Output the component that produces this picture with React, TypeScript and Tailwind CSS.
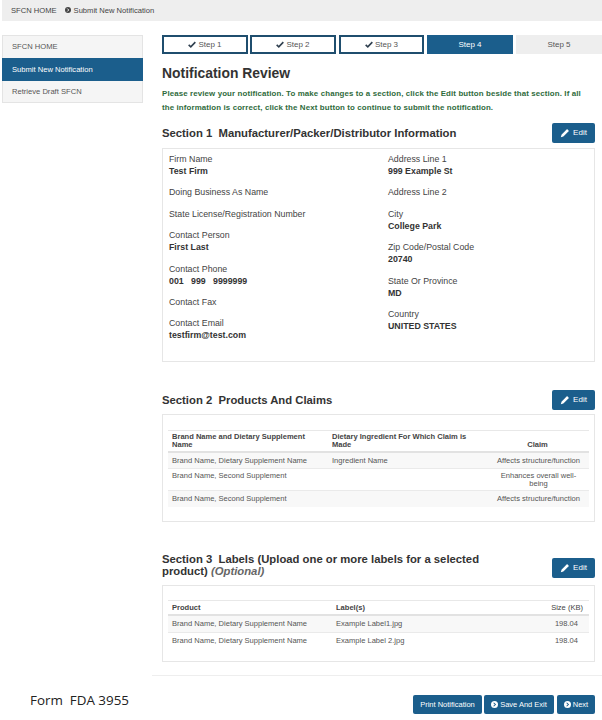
import React from "react";

const blue = "bg-[#1b5e8c]";

function Check() {
  return (
    <svg viewBox="0 0 12 10" className="w-[8px] h-[7px] mr-[2px] inline-block" aria-hidden="true">
      <path d="M1 5.5 L4.2 8.5 L11 1.5" fill="none" stroke="#2f3f4f" strokeWidth="2.4" />
    </svg>
  );
}

function Circle() {
  return (
    <svg viewBox="0 0 12 12" className="w-[7px] h-[7px] inline-block mr-[2px]" aria-hidden="true">
      <circle cx="6" cy="6" r="6" fill="currentColor" />
      <path d="M4.5 3 L7.5 6 L4.5 9" fill="none" stroke="#1b5e8c" strokeWidth="1.8" />
    </svg>
  );
}

function Edit({ className = "" }: { className?: string }) {
  return (
    <button className={`${blue} ${className} w-[43px] h-[20px] rounded-[2px] flex items-center justify-center text-white text-[8px] shrink-0`}>
      <svg viewBox="0 0 12 12" className="w-[10px] h-[10px] mr-[3px]" aria-hidden="true">
        <path d="M1 11 L1.8 8 L8.5 1.3 L10.7 3.5 L4 10.2 Z" fill="#fff" />
      </svg>
      Edit
    </button>
  );
}

function Step({ n, w }: { n: number; w: string }) {
  return (
    <div className={`${w} h-[19px] border-2 border-[#1f4e6e] bg-white flex items-center justify-center text-[8px] text-[#555]`}>
      <Check />
      Step {n}
    </div>
  );
}

function Field({ label, value }: { label: string; value?: string }) {
  return (
    <div className="mb-[9.4px]">
      <div className="leading-[12px] text-[#444]">{label}</div>
      {value && <div className="leading-[12px] font-bold text-[#333] whitespace-pre">{value}</div>}
    </div>
  );
}

const claims = [
  ["Brand Name, Dietary Supplement Name", "Ingredient Name", "Affects structure/function", "h-[16px] pt-[4px] bg-[#f8f8f8]"],
  ["Brand Name, Second Supplement", "", "Enhances overall well-being", "h-[22px] pt-[3px]"],
  ["Brand Name, Second Supplement", "", "Affects structure/function", "h-[16px] pt-[4px] bg-[#f8f8f8]"],
];

const labels = [
  ["Brand Name, Dietary Supplement Name", "Example Label1.jpg", "198.04", "h-[17px] bg-[#f8f8f8]"],
  ["Brand Name, Dietary Supplement Name", "Example Label 2.jpg", "198.04", "h-[16px]"],
];

export default function App() {
  return (
    <div className="relative w-[602px] h-[720px] bg-white overflow-hidden font-['Liberation_Sans',Arial,sans-serif] text-[#444]">
      <div className="ml-[2px] h-[21px] bg-[#eeeeee] flex items-center pl-[9px] text-[7.6px] text-[#444]">
        <span>SFCN HOME</span>
        <span className="ml-[8px] text-[#444] flex items-center">
          <svg viewBox="0 0 12 12" className="w-[6px] h-[6px] mr-[3px]" aria-hidden="true">
            <circle cx="6" cy="6" r="6" fill="#444" />
            <path d="M4.5 3 L7.5 6 L4.5 9" fill="none" stroke="#fff" strokeWidth="1.8" />
          </svg>
          Submit New Notification
        </span>
      </div>

      <div className="flex mt-[14px]">
        <aside className="ml-[2px] w-[141px] h-[68px] shrink-0 bg-[#f5f5f5] border border-[#e4e4e4] text-[7.6px]">
          <div className="h-[22px] flex items-center pl-[9px] text-[#555]">SFCN HOME</div>
          <div className={`${blue} h-[23px] -mx-px flex items-center pl-[10px] text-white`}>Submit New Notification</div>
          <div className="h-[21px] flex items-center pl-[9px] text-[#555]">Retrieve Draft SFCN</div>
        </aside>

        <main className="ml-[19px] w-[433px] shrink-0">
          <div className="flex w-[440px]">
            <Step n={1} w="w-[86px]" />
            <div className="ml-[2px]"><Step n={2} w="w-[86px]" /></div>
            <div className="ml-[3px]"><Step n={3} w="w-[85px]" /></div>
            <div className={`${blue} ml-[3px] w-[86px] h-[19px] flex items-center justify-center text-[8px] text-white`}>Step 4</div>
            <div className="ml-[3px] w-[86px] h-[19px] bg-[#eeeeee] flex items-center justify-center text-[8px] text-[#555]">Step 5</div>
          </div>

          <h1 className="mt-[10px] text-[13.9px] leading-[18px] font-bold text-[#333]">Notification Review</h1>

          <p className="mt-[5px] text-[7.9px] leading-[14px] font-bold text-[#2f6b3c] tracking-[0.12px]">
            Please review your notification. To make changes to a section, click the Edit button beside that section. If all the information is correct, click the Next button to continue to submit the notification.
          </p>

          <div className="mt-[8px] h-[20px] flex items-center justify-between">
            <h2 className="text-[11.3px] leading-[12px] font-bold text-[#333] whitespace-nowrap">Section 1&nbsp; Manufacturer/Packer/Distributor Information</h2>
            <Edit />
          </div>

          <div className="mt-[5px] h-[214px] border border-[#e6e6e6] pt-[4px] pl-[6px] grid grid-cols-[219px_1fr] text-[8.8px]">
            <div>
              <Field label="Firm Name" value="Test Firm" />
              <Field label="Doing Business As Name" />
              <Field label="State License/Registration Number" />
              <Field label="Contact Person" value="First Last" />
              <Field label="Contact Phone" value="001   999   9999999" />
              <Field label="Contact Fax" />
              <Field label="Contact Email" value="testfirm@test.com" />
            </div>
            <div>
              <Field label="Address Line 1" value="999 Example St" />
              <Field label="Address Line 2" />
              <Field label="City" value="College Park" />
              <Field label="Zip Code/Postal Code" value="20740" />
              <Field label="State Or Province" value="MD" />
              <Field label="Country" value="UNITED STATES" />
            </div>
          </div>

          <div className="mt-[28px] h-[20px] flex items-center justify-between">
            <h2 className="text-[11.3px] leading-[12px] font-bold text-[#333]">Section 2&nbsp; Products And Claims</h2>
            <Edit />
          </div>

          <div className="mt-[4px] h-[108px] border border-[#e6e6e6] pt-[15px] px-[5px] text-[7.55px]">
            <div className="border-t border-[#e8e8e8]">
              <div className="h-[22px] grid grid-cols-[160px_162px_1fr] items-end pl-[4px] border-b-2 border-[#e2e2e2] font-bold text-[#444] leading-[8px] pb-[2px]">
                <div className="pr-[20px]">Brand Name and Dietary Supplement Name</div>
                <div className="pr-[20px]">Dietary Ingredient For Which Claim is Made</div>
                <div className="text-center pr-[8px] font-bold">Claim</div>
              </div>
              {claims.map((r, i) => (
                <div key={i} className={`${r[3]} grid grid-cols-[160px_162px_1fr] pl-[4px] border-b border-[#eaeaea] last:border-b-0 text-[#555] leading-[8px]`}>
                  <div>{r[0]}</div>
                  <div>{r[1]}</div>
                  <div className="text-center pr-[6px]">{r[2]}</div>
                </div>
              ))}
            </div>
          </div>

          <div className="mt-[31px] h-[28px] flex items-start justify-between">
            <h2 className="text-[11.3px] leading-[12px] font-bold text-[#333] w-[345px]">
              Section 3&nbsp; Labels (Upload one or more labels for a selected product) <em className="font-bold text-[#666]">(Optional)</em>
            </h2>
            <Edit className="mt-[5px]" />
          </div>

          <div className="mt-[4px] h-[77px] border border-[#e6e6e6] pt-[14px] px-[5px] text-[7.55px]">
            <div className="border-t border-[#e8e8e8]">
              <div className="h-[15px] grid grid-cols-[164px_1fr_60px] items-center pl-[4px] border-b-2 border-[#e2e2e2] font-bold text-[#444]">
                <div>Product</div>
                <div>Label(s)</div>
                <div className="text-right pr-[6px] font-normal">Size (KB)</div>
              </div>
              {labels.map((r, i) => (
                <div key={i} className={`${r[3]} grid grid-cols-[164px_1fr_60px] items-center pl-[4px] border-b border-[#eaeaea] last:border-b-0 text-[#555]`}>
                  <div>{r[0]}</div>
                  <div>{r[1]}</div>
                  <div className="text-right pr-[11px]">{r[2]}</div>
                </div>
              ))}
            </div>
          </div>

          <div className="mt-[13px] -ml-[10px] w-[450px] border-t border-[#eeeeee]" />

          <div className="mt-[19px] flex justify-end text-[7.5px] text-white">
            <button className={`${blue} w-[69px] h-[19px] rounded-[2px]`}>Print Notification</button>
            <button className={`${blue} ml-[2px] w-[70px] h-[19px] rounded-[2px] flex items-center justify-center`}><Circle />Save And Exit</button>
            <button className={`${blue} ml-[3px] w-[38px] h-[19px] rounded-[2px] flex items-center justify-center`}><Circle />Next</button>
          </div>
        </main>
      </div>

      <div className="absolute left-[30px] top-[691px] text-[13.4px] leading-[18px] text-[#222] font-['Open_Sans',sans-serif]">Form&nbsp; FDA 3955</div>
    </div>
  );
}
